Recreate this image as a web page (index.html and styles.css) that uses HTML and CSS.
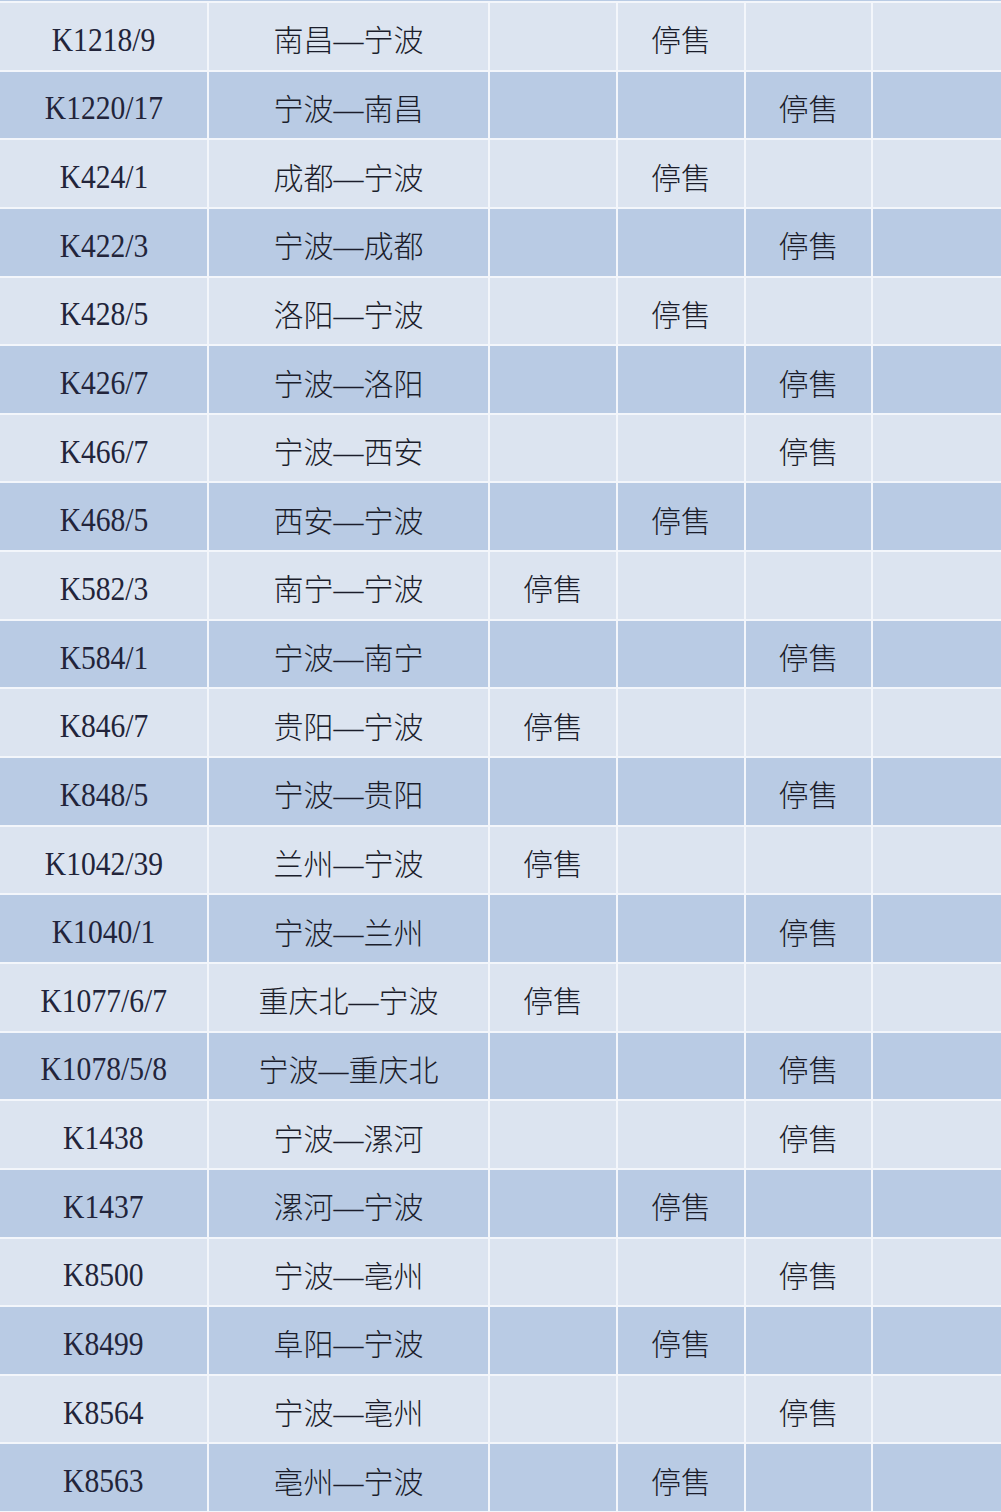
FILE: index.html
```html
<!DOCTYPE html>
<html lang="zh-CN">
<head>
<meta charset="utf-8">
<title>停售车次</title>
<link rel="stylesheet" href="styles.css">
</head>
<body>
<div class="sheet">
  <div class="grid">
    <div class="c lt num"><span>K1218/9</span></div><div class="c lt">南昌—宁波</div><div class="c lt"></div><div class="c lt">停售</div><div class="c lt"></div><div class="c lt"></div>
    <div class="c dk num"><span>K1220/17</span></div><div class="c dk">宁波—南昌</div><div class="c dk"></div><div class="c dk"></div><div class="c dk">停售</div><div class="c dk"></div>
    <div class="c lt num"><span>K424/1</span></div><div class="c lt">成都—宁波</div><div class="c lt"></div><div class="c lt">停售</div><div class="c lt"></div><div class="c lt"></div>
    <div class="c dk num"><span>K422/3</span></div><div class="c dk">宁波—成都</div><div class="c dk"></div><div class="c dk"></div><div class="c dk">停售</div><div class="c dk"></div>
    <div class="c lt num"><span>K428/5</span></div><div class="c lt">洛阳—宁波</div><div class="c lt"></div><div class="c lt">停售</div><div class="c lt"></div><div class="c lt"></div>
    <div class="c dk num"><span>K426/7</span></div><div class="c dk">宁波—洛阳</div><div class="c dk"></div><div class="c dk"></div><div class="c dk">停售</div><div class="c dk"></div>
    <div class="c lt num"><span>K466/7</span></div><div class="c lt">宁波—西安</div><div class="c lt"></div><div class="c lt"></div><div class="c lt">停售</div><div class="c lt"></div>
    <div class="c dk num"><span>K468/5</span></div><div class="c dk">西安—宁波</div><div class="c dk"></div><div class="c dk">停售</div><div class="c dk"></div><div class="c dk"></div>
    <div class="c lt num"><span>K582/3</span></div><div class="c lt">南宁—宁波</div><div class="c lt">停售</div><div class="c lt"></div><div class="c lt"></div><div class="c lt"></div>
    <div class="c dk num"><span>K584/1</span></div><div class="c dk">宁波—南宁</div><div class="c dk"></div><div class="c dk"></div><div class="c dk">停售</div><div class="c dk"></div>
    <div class="c lt num"><span>K846/7</span></div><div class="c lt">贵阳—宁波</div><div class="c lt">停售</div><div class="c lt"></div><div class="c lt"></div><div class="c lt"></div>
    <div class="c dk num"><span>K848/5</span></div><div class="c dk">宁波—贵阳</div><div class="c dk"></div><div class="c dk"></div><div class="c dk">停售</div><div class="c dk"></div>
    <div class="c lt num"><span>K1042/39</span></div><div class="c lt">兰州—宁波</div><div class="c lt">停售</div><div class="c lt"></div><div class="c lt"></div><div class="c lt"></div>
    <div class="c dk num"><span>K1040/1</span></div><div class="c dk">宁波—兰州</div><div class="c dk"></div><div class="c dk"></div><div class="c dk">停售</div><div class="c dk"></div>
    <div class="c lt num"><span>K1077/6/7</span></div><div class="c lt">重庆北—宁波</div><div class="c lt">停售</div><div class="c lt"></div><div class="c lt"></div><div class="c lt"></div>
    <div class="c dk num"><span>K1078/5/8</span></div><div class="c dk">宁波—重庆北</div><div class="c dk"></div><div class="c dk"></div><div class="c dk">停售</div><div class="c dk"></div>
    <div class="c lt num"><span>K1438</span></div><div class="c lt">宁波—漯河</div><div class="c lt"></div><div class="c lt"></div><div class="c lt">停售</div><div class="c lt"></div>
    <div class="c dk num"><span>K1437</span></div><div class="c dk">漯河—宁波</div><div class="c dk"></div><div class="c dk">停售</div><div class="c dk"></div><div class="c dk"></div>
    <div class="c lt num"><span>K8500</span></div><div class="c lt">宁波—亳州</div><div class="c lt"></div><div class="c lt"></div><div class="c lt">停售</div><div class="c lt"></div>
    <div class="c dk num"><span>K8499</span></div><div class="c dk">阜阳—宁波</div><div class="c dk"></div><div class="c dk">停售</div><div class="c dk"></div><div class="c dk"></div>
    <div class="c lt num"><span>K8564</span></div><div class="c lt">宁波—亳州</div><div class="c lt"></div><div class="c lt"></div><div class="c lt">停售</div><div class="c lt"></div>
    <div class="c dk num"><span>K8563</span></div><div class="c dk">亳州—宁波</div><div class="c dk"></div><div class="c dk">停售</div><div class="c dk"></div><div class="c dk"></div>
  </div>
</div>
</body>
</html>
```
FILE: styles.css
```css
html, body {
  margin: 0;
  padding: 0;
  background: #f3f6fb;
}
.sheet {
  width: 1001px;
  height: 1512px;
  overflow: hidden;
  background: #f3f6fb;
  border-top: 1px solid #b9cbe4;
  box-sizing: border-box;
  padding-top: 2px;
}
.grid {
  display: grid;
  grid-template-columns: 207px 279px 126px 126px 125px 1fr;
  grid-auto-rows: 66.65px;
  gap: 2px;
}
.c {
  display: flex;
  align-items: center;
  justify-content: center;
  padding-top: 4px;
  box-sizing: border-box;
  font-family: "Liberation Serif", "Noto Sans CJK SC", serif;
  font-size: 30px;
  font-weight: 300;
  color: #1b1d2b;
  white-space: nowrap;
}
.num {
  padding-top: 7px;
  font-size: 34px;
  font-weight: 400;
  color: #22243a;
}
.num span {
  display: inline-block;
  transform: scaleX(0.87);
}
.lt {
  background: #dce4f0;
}
.dk {
  background: #b9cbe4;
}
```
